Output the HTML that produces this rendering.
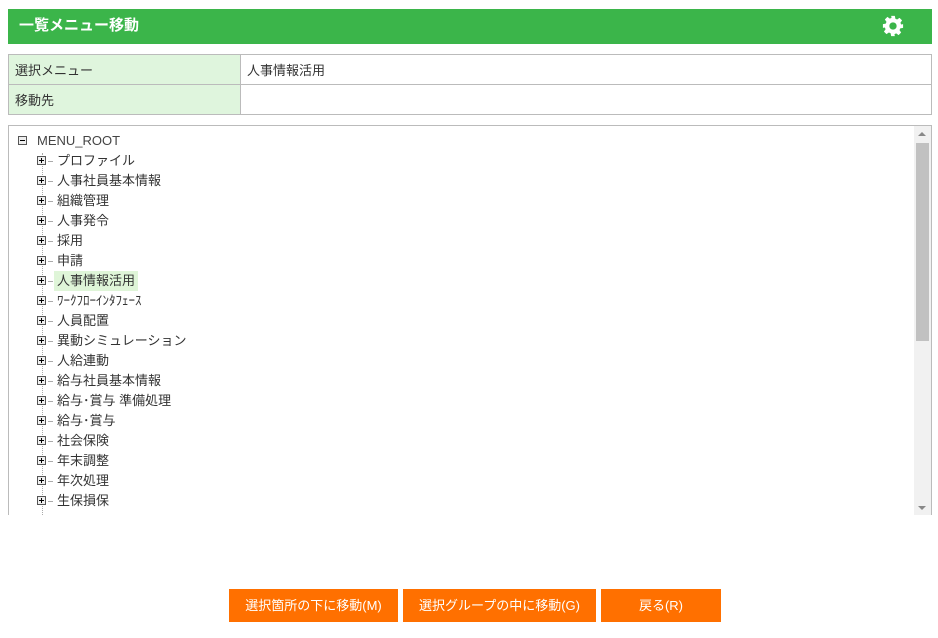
<!DOCTYPE html>
<html><head><meta charset="utf-8"><style>
*{margin:0;padding:0;box-sizing:border-box}
body{width:938px;height:638px;background:#fff;font-family:"Liberation Sans","Noto Sans CJK JP",sans-serif;font-size:13px;color:#333;position:relative;overflow:hidden}
.hdr{position:absolute;left:8px;top:9px;width:924px;height:35px;background:#3bb54a;color:#fff;font-weight:bold;font-size:15px;line-height:33px;padding-left:11px}
.gear{position:absolute;right:28px;top:6px}
table{position:absolute;left:8px;top:54px;width:924px;border-collapse:collapse}
td{border:1px solid #bbb;height:30px;padding:0 6px;font-size:13px;vertical-align:middle}
td.l{background:#dff5dd;width:232px}
.tree{position:absolute;left:8px;top:125px;width:924px;height:390px;border:1px solid #bbb;border-bottom:none;overflow:hidden}
.sb{position:absolute;right:0;top:0;width:17px;height:390px;background:#f1f1f1}
.th{position:absolute;left:2px;top:17px;width:13px;height:198px;background:#c1c1c1}
.it{position:absolute;left:0;height:20px;line-height:20px;font-size:13px;white-space:nowrap}
.bx{position:absolute;width:9px;height:9px;border:1px solid #555;background:#eee;top:5px}
.bx:before{content:"";position:absolute;left:1px;top:3px;width:5px;height:1px;background:#000}
.bx.p:after{content:"";position:absolute;left:3px;top:1px;width:1px;height:5px;background:#000}
.ln{position:absolute;left:33px;top:27px;width:0;height:370px;border-left:1px dotted #aaa}
.dash{position:absolute;top:10px;width:5px;border-top:1px solid #aaa}
.btn{position:absolute;top:589px;height:33px;background:#ff7000;color:#fff;font-size:13px;text-align:center;line-height:33px}
</style></head><body>
<div class="hdr">一覧メニュー移動
<svg class="gear" width="22" height="22" viewBox="0 0 24 24"><path fill="#fff" d="M10 1h4l.6 3.1 1.9.8 2.6-1.8 2.8 2.8-1.8 2.6.8 1.9L23 10v4l-3.1.6-.8 1.9 1.8 2.6-2.8 2.8-2.6-1.8-1.9.8L14 23h-4l-.6-3.1-1.9-.8-2.6 1.8-2.8-2.8 1.8-2.6-.8-1.9L1 14v-4l3.1-.6.8-1.9-1.8-2.6 2.8-2.8 2.6 1.8 1.9-.8zM12 8a4 4 0 100 8 4 4 0 000-8z"/></svg></div>
<table><tr><td class="l">選択メニュー</td><td>人事情報活用</td></tr><tr><td class="l">移動先</td><td></td></tr></table>
<div class="tree">
<div class="ln"></div>
<div class="it" style="top:5px"><span class="bx" style="left:9px"></span><span style="position:absolute;left:28px;color:#444">MENU_ROOT</span></div>
<div id="items"></div>
<div class="sb"><div style="position:absolute;left:4px;top:6px;border:4px solid transparent;border-bottom:4px solid #888;border-top:none"></div><div class="th"></div><div style="position:absolute;left:4px;bottom:6px;border:4px solid transparent;border-top:4px solid #888;border-bottom:none"></div></div>
</div>
<script>
var a=["プロファイル","人事社員基本情報","組織管理","人事発令","採用","申請","人事情報活用","ﾜｰｸﾌﾛｰｲﾝﾀﾌｪｰｽ","人員配置","異動シミュレーション","人給連動","給与社員基本情報","給与･賞与 準備処理","給与･賞与","社会保険","年末調整","年次処理","生保損保"];
var h="";a.forEach(function(t,i){var y=25+i*20;var hl=i==6?"background:#dff5d8;padding:0 3px;left:45px;":"left:48px;";h+='<div class="it" style="top:'+y+'px;width:300px"><span class="bx p" style="left:28px"></span><span class="dash" style="left:39px"></span><span style="position:absolute;'+hl+'">'+t+'</span></div>';});
document.getElementById("items").innerHTML=h;
</script>
<div class="btn" style="left:229px;width:169px">選択箇所の下に移動(M)</div>
<div class="btn" style="left:403px;width:193px">選択グループの中に移動(G)</div>
<div class="btn" style="left:601px;width:120px">戻る(R)</div>
</body></html>
